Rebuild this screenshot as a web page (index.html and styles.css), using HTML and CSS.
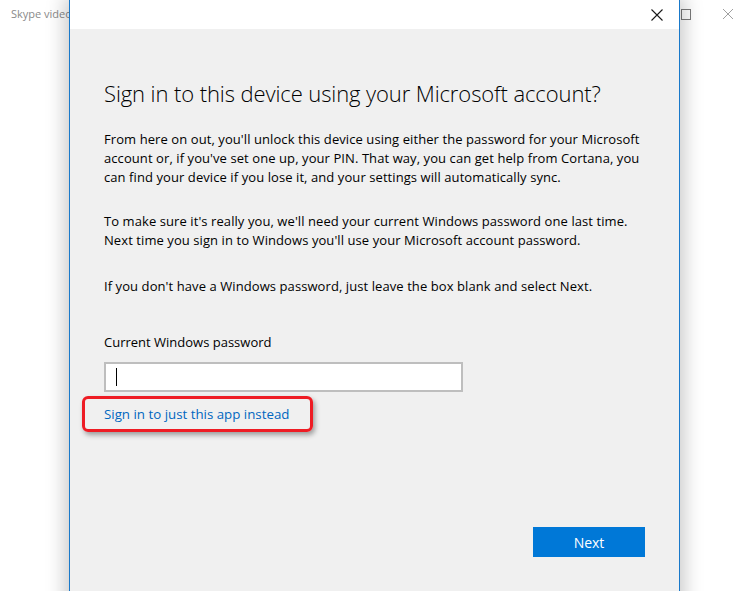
FILE: index.html
```html
<!DOCTYPE html>
<html>
<head>
<meta charset="utf-8">
<link rel="stylesheet" href="styles.css">
</head>
<body>
<div class="desktop">
  <div class="bgwin">
    <div class="bg-title">Skype video</div>
    <div class="bg-controls">
      <span class="bg-max"></span>
      <svg class="bg-close" width="12" height="12" viewBox="0 0 12 12"><path d="M1 1L11 11M11 1L1 11" stroke="#a0a0a0" stroke-width="1"/></svg>
    </div>
  </div>
  <div class="dialog">
    <div class="titlebar">
      <svg class="close" width="12" height="12" viewBox="0 0 12 12"><path d="M0.5 0.5L11.5 11.5M11.5 0.5L0.5 11.5" stroke="#1a1a1a" stroke-width="1.1"/></svg>
    </div>
    <div class="content">
      <h1 class="heading">Sign in to this device using your Microsoft account?</h1>
      <p class="para p1">From here on out, you'll unlock this device using either the password for your Microsoft account or, if you've set one up, your PIN. That way, you can get help from Cortana, you can find your device if you lose it, and your settings will automatically sync.</p>
      <p class="para p2">To make sure it's really you, we'll need your current Windows password one last time. Next time you sign in to Windows you'll use your Microsoft account password.</p>
      <p class="para p3">If you don't have a Windows password, just leave the box blank and select Next.</p>
      <div class="label">Current Windows password</div>
      <div class="input"><span class="caret"></span></div>
      <div class="linkwrap">
        <a class="link">Sign in to just this app instead</a>
        <span class="highlight"></span>
      </div>
      <div class="actions"><button class="next">Next</button></div>
    </div>
  </div>
</div>
</body>
</html>
```
FILE: styles.css
```css
html, body {
  margin: 0;
  padding: 0;
  background: #ffffff;
  overflow: hidden;
}
.desktop {
  position: relative;
  width: 750px;
  height: 591px;
  overflow: hidden;
  font-family: "Open Sans", "Noto Sans", sans-serif;
}
.bgwin {
  position: absolute;
  inset: 0;
}
.bg-title {
  position: absolute;
  left: 11px;
  top: 6px;
  font-size: 11px;
  color: #8a8a8a;
}
.bg-controls {
  position: absolute;
  left: 680px;
  top: 8px;
  display: flex;
  align-items: center;
}
.bg-max {
  width: 8px;
  height: 9px;
  border: 1px solid #7a7a7a;
  margin-left: 1px;
}
.bg-close {
  margin-left: 31px;
}
.dialog {
  position: absolute;
  left: 69px;
  top: 0;
  width: 609px;
  height: 640px;
  border-left: 1px solid #1979ca;
  border-right: 1px solid #1979ca;
  background: #f0f0f0;
  box-shadow: 0 0 18px 4px rgba(0,0,0,0.22);
  display: flex;
  flex-direction: column;
}
.titlebar {
  height: 29px;
  background: #ffffff;
  display: flex;
  justify-content: flex-end;
  align-items: center;
  padding-right: 16px;
  flex: none;
}
.close {
  display: block;
}
.content {
  padding: 0 34px 0 34px;
  color: #000;
}
.heading {
  margin: 49px 0 0 0;
  font-size: 22px;
  font-weight: 300;
  line-height: 30px;
  color: #000;
  letter-spacing: -0.1px;
}
.para {
  margin: 22px 0 0 0;
  font-size: 13px;
  line-height: 19px;
  width: 545px;
  letter-spacing: 0.08px;
}
.para.p2 { margin-top: 25px; }
.para.p3 { margin-top: 27px; }
.label {
  margin-top: 37px;
  font-size: 13px;
  line-height: 19px;
}
.input {
  margin-top: 10px;
  width: 345px;
  height: 26px;
  background: #fff;
  border: 2px solid #bebebe;
  display: flex;
  align-items: center;
  padding-left: 10px;
  box-sizing: content-box;
}
.caret {
  width: 1px;
  height: 18px;
  background: #000;
}
.linkwrap {
  position: relative;
  margin-top: 10px;
  height: 20px;
}
.link {
  font-size: 13.3px;
  line-height: 20px;
  color: #0067c0;
}
.highlight {
  position: absolute;
  left: -22px;
  top: -6px;
  width: 225px;
  height: 30px;
  border: 3px solid #ee1c24;
  border-radius: 6px;
  box-shadow: 2px 3px 5px rgba(0,0,0,0.35);
}
.actions {
  margin-top: 105px;
  display: flex;
  justify-content: flex-end;
}
.next {
  width: 112px;
  height: 30px;
  border: 0;
  background: #0078d7;
  color: #fff;
  font-family: "Open Sans", "Noto Sans", sans-serif;
  font-size: 14px;
}
```
